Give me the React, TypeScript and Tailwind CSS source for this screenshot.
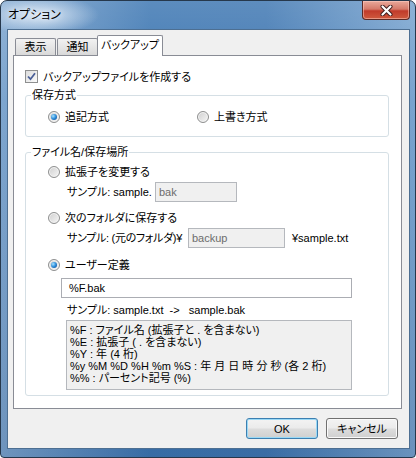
import React from "react";

function Radio({ checked, label }: { checked?: boolean; label: string }) {
  return (
    <div className="flex h-[16px] items-center whitespace-nowrap">
      <span className="flex h-[12px] w-[12px] shrink-0 items-center justify-center rounded-full border border-[#8e8f8f] bg-[linear-gradient(135deg,#cfcfcf,#f6f6f6)] shadow-[inset_0_0_0_1px_#f4f4f4]">
        {checked && (
          <span className="h-[6px] w-[6px] rounded-full bg-[radial-gradient(circle_at_35%_35%,#a6e2ff,#2a8ad8_50%,#0c3f86)]" />
        )}
      </span>
      <span className="ml-[5px] leading-[12px]">{label}</span>
    </div>
  );
}

function Box({ w, text }: { w: string; text: string }) {
  return (
    <div className={`flex h-[20px] shrink-0 items-center border border-[#b5b8bd] bg-[#f0f0f0] pl-[3px] text-[#6d6d6d] ${w}`}>
      {text}
    </div>
  );
}

function Button({ label, primary }: { label: string; primary?: boolean }) {
  return (
    <button
      className={
        "flex h-[21px] w-[72px] items-center justify-center rounded-[3px] border bg-[linear-gradient(#f3f3f3,#ebebeb_48%,#dddddd_52%,#cfcfcf)] leading-[12px] " +
        (primary
          ? "border-[#3c7fb1] shadow-[inset_0_0_0_1px_#9ad9f6]"
          : "border-[#707070] shadow-[inset_0_0_0_1px_#fafafa]")
      }
    >
      {label}
    </button>
  );
}

const helpLines = [
  "%F : ファイル名 (拡張子と . を含まない)",
  "%E : 拡張子 ( . を含まない)",
  "%Y : 年 (4 桁)",
  "%y %M %D %H %m %S : 年 月 日 時 分 秒 (各 2 桁)",
  "%% : パーセント記号 (%)",
];

export default function App() {
  return (
    <div className="h-[458px] w-[416px] bg-white font-['Liberation_Sans','Noto_Sans_CJK_JP',sans-serif] text-[11px] text-black [font-feature-settings:'palt']">
      <div className="flex h-full w-full flex-col rounded-t-[7px] rounded-b-[4px] border border-[#26384c] bg-[radial-gradient(ellipse_60px_20px_at_38px_14px,rgba(225,236,248,0.95),transparent),linear-gradient(to_bottom,rgba(255,255,255,0.15),transparent_100px,rgba(0,20,60,0.12)),linear-gradient(to_right,#7ea6cf,#3f78b3_36%,#4279b3_64%,#79a4cf)]">
        {/* title bar */}
        <div className="flex h-[28px] items-start justify-between">
          <span className="ml-[7px] mt-[7px] text-[12px] leading-[14px] [text-shadow:0_0_6px_#fff]">オプション</span>
          <div className="mr-[5px] flex h-[19px] w-[48px] items-center justify-center rounded-b-[4px] border border-t-0 border-[#5b2a26] bg-[linear-gradient(#e9a99b,#d57a6a_45%,#c13b2b_55%,#cf5a3e)] shadow-[inset_0_0_0_1px_rgba(255,210,200,0.5)]">
            <svg width="13" height="11" viewBox="0 0 13 11">
              <path d="M2.5 1.5 L10.5 9.5 M10.5 1.5 L2.5 9.5" stroke="#3b1b1b" strokeWidth="4" strokeLinecap="round" />
              <path d="M2.5 1.5 L10.5 9.5 M10.5 1.5 L2.5 9.5" stroke="#ffffff" strokeWidth="2.2" strokeLinecap="round" />
            </svg>
          </div>
        </div>

        {/* client area */}
        <div className="mb-[8px] ml-[6px] mr-[5px] flex flex-1 flex-col border border-[#4d6f92] bg-[#f0f0f0]">
          {/* tabs */}
          <div className="flex h-[25px] items-end pl-[7px]">
            <div className="flex h-[17px] w-[41px] items-center justify-center rounded-t-[2px] border border-b-0 border-[#898c95] bg-[linear-gradient(#f2f2f2,#e6e6e6_50%,#d9d9d9)] leading-[12px]">
              表示
            </div>
            <div className="ml-[1px] flex h-[17px] w-[41px] items-center justify-center rounded-t-[2px] border border-b-0 border-[#898c95] bg-[linear-gradient(#f2f2f2,#e6e6e6_50%,#d9d9d9)] leading-[12px]">
              通知
            </div>
            <div className="relative z-10 -mb-[1px] -ml-[1px] flex h-[21px] w-[66px] items-center justify-center rounded-t-[2px] border border-b-0 border-[#898c95] bg-white pb-[2px] leading-[12px]">
              バックアップ
            </div>
          </div>

          {/* tab panel */}
          <div className="ml-[5px] flex h-[354px] w-[389px] flex-col border border-[#898c95] bg-white">
            <div className="ml-[11px] mt-[14px] flex h-[13px] items-center">
              <span className="flex h-[13px] w-[13px] items-center justify-center border border-[#8e8f8f] bg-[linear-gradient(135deg,#dcdcdc,#fbfbfb)]">
                <svg width="11" height="11" viewBox="0 0 11 11">
                  <path d="M2 5.5 L4.5 8.2 L9 2.3" fill="none" stroke="#4a5f97" strokeWidth="1.8" />
                </svg>
              </span>
              <span className="ml-[5px] leading-[12px]">バックアップファイルを作成する</span>
            </div>

            <fieldset className="ml-[11px] mt-[6px] w-[364px] rounded-[3px] border border-[#d5dfe5] pb-[11px]">
              <legend className="ml-[5px] px-[1px] leading-[13px]">保存方式</legend>
              <div className="mt-[7px] flex pl-[22px]">
                <div className="w-[149px]">
                  <Radio checked label="追記方式" />
                </div>
                <Radio label="上書き方式" />
              </div>
            </fieldset>

            <fieldset className="ml-[11px] mt-[9px] w-[364px] rounded-[3px] border border-[#d5dfe5] pb-[5px]">
              <legend className="ml-[5px] px-[1px] leading-[13px]">ファイル名/保存場所</legend>
              <div className="flex flex-col pl-[22px]">
                <div className="mt-[5px]">
                  <Radio label="拡張子を変更する" />
                </div>
                <div className="ml-[19px] mt-[2px] flex h-[20px] items-center whitespace-nowrap">
                  <span className="min-w-[88px]">サンプル: sample.</span>
                  <Box w="w-[82px]" text="bak" />
                </div>
                <div className="mt-[8px]">
                  <Radio label="次のフォルダに保存する" />
                </div>
                <div className="ml-[19px] mt-[2px] flex h-[20px] items-center whitespace-nowrap">
                  <span className="min-w-[121px] pr-[2px] tracking-[-0.3px]">サンプル: (元のフォルダ)¥</span>
                  <Box w="w-[97px]" text="backup" />
                  <span className="ml-[7px]">¥sample.txt</span>
                </div>
                <div className="mt-[9px]">
                  <Radio checked label="ユーザー定義" />
                </div>
                <div className="ml-[13px] mt-[5px] flex h-[20px] w-[291px] items-center border border-[#abadb3] bg-white pl-[7px]">
                  %F.bak
                </div>
                <div className="ml-[19px] mt-[4px] flex h-[16px] items-center whitespace-nowrap">
                  サンプル: sample.txt&nbsp;&nbsp;-&gt;&nbsp;&nbsp;&nbsp;sample.bak
                </div>
                <div className="ml-[18px] mt-[2px] h-[70px] w-[286px] border border-[#b5b8bd] bg-[#f0f0f0] pl-[3px] pt-[3px] leading-[12px]">
                  {helpLines.map((l) => (
                    <div key={l} className="h-[12px] whitespace-pre">
                      {l}
                    </div>
                  ))}
                </div>
              </div>
            </fieldset>
          </div>

          {/* buttons */}
          <div className="mt-[9px] flex justify-end gap-[8px] pr-[11px]">
            <Button primary label="OK" />
            <Button label="キャンセル" />
          </div>
        </div>
      </div>
    </div>
  );
}
